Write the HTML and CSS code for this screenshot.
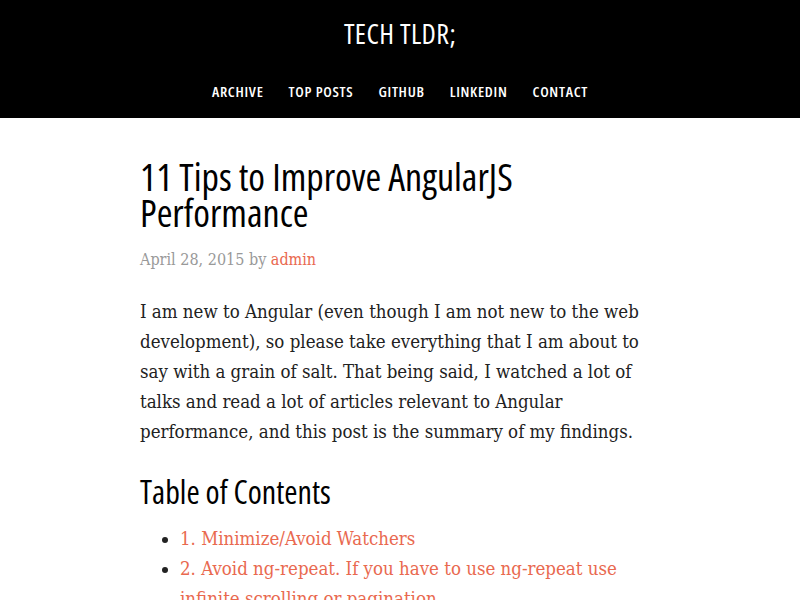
FILE: index.html
```html
<!DOCTYPE html>
<html>
<head>
<meta charset="utf-8">
<title>11 Tips to Improve AngularJS Performance</title>
<link rel="stylesheet" href="styles.css">
</head>
<body>
<header class="site-header">
  <div class="site-title">TECH TLDR;</div>
  <nav class="site-nav">
    <a href="#">Archive</a>
    <a href="#">Top Posts</a>
    <a href="#">Github</a>
    <a href="#">LinkedIn</a>
    <a href="#">Contact</a>
  </nav>
</header>
<main class="content">
  <h1 class="post-title">11 Tips to Improve AngularJS Performance</h1>
  <div class="post-meta">April 28, 2015 by <a href="#">admin</a></div>
  <p class="post-text">I am new to Angular (even though I am not new to the web development), so please take everything that I am about to say with a grain of salt. That being said, I watched a lot of talks and read a lot of articles relevant to Angular performance, and this post is the summary of my findings.</p>
  <h2 class="section-title">Table of Contents</h2>
  <ul class="toc">
    <li><a href="#">1. Minimize/Avoid Watchers</a></li>
    <li><a href="#">2. Avoid ng-repeat. If you have to use ng-repeat use infinite scrolling or pagination</a></li>
    <li><a href="#">3. Use Bind once when possible</a></li>
  </ul>
</main>
</body>
</html>
```

FILE: styles.css
```css
html, body {
  margin: 0;
  padding: 0;
  background: #fff;
}
body {
  font-family: "DejaVu Serif Condensed", "DejaVu Serif", serif;
  font-stretch: condensed;
  color: #222;
}
a {
  text-decoration: none;
}
.site-header {
  background: #000;
  height: 118px;
  display: flex;
  flex-direction: column;
  align-items: center;
}
.site-title,
.site-nav a,
.post-title,
.section-title {
  font-family: "Open Sans", sans-serif;
  font-stretch: 75%;
}
.site-title {
  color: #fff;
  font-size: 28px;
  letter-spacing: 0.4px;
  margin-top: 16px;
  line-height: 34px;
}
.site-nav {
  display: flex;
  gap: 25px;
  margin-top: 32px;
}
.site-nav a {
  color: #fff;
  font-size: 15px;
  font-weight: 600;
  text-transform: uppercase;
  letter-spacing: 0.7px;
  line-height: 18px;
}
.content {
  width: 520px;
  margin: 0 auto;
  padding-top: 40px;
}
.post-title {
  font-weight: normal;
  font-size: 38px;
  line-height: 36px;
  margin: 0 0 18px;
  color: #000;
}
.post-meta {
  font-size: 16px;
  color: #999;
  line-height: 24px;
}
.post-meta a {
  color: #e9694f;
}
.post-text {
  font-size: 18.5px;
  line-height: 30px;
  margin: 25px 0 0;
  color: #222;
}
.section-title {
  font-weight: normal;
  font-size: 32px;
  line-height: 36px;
  margin: 27px 0 14px;
  color: #000;
}
.toc {
  margin: 0;
  padding-left: 40px;
  font-size: 18.5px;
  line-height: 30px;
}
.toc a {
  color: #e9694f;
}
```
